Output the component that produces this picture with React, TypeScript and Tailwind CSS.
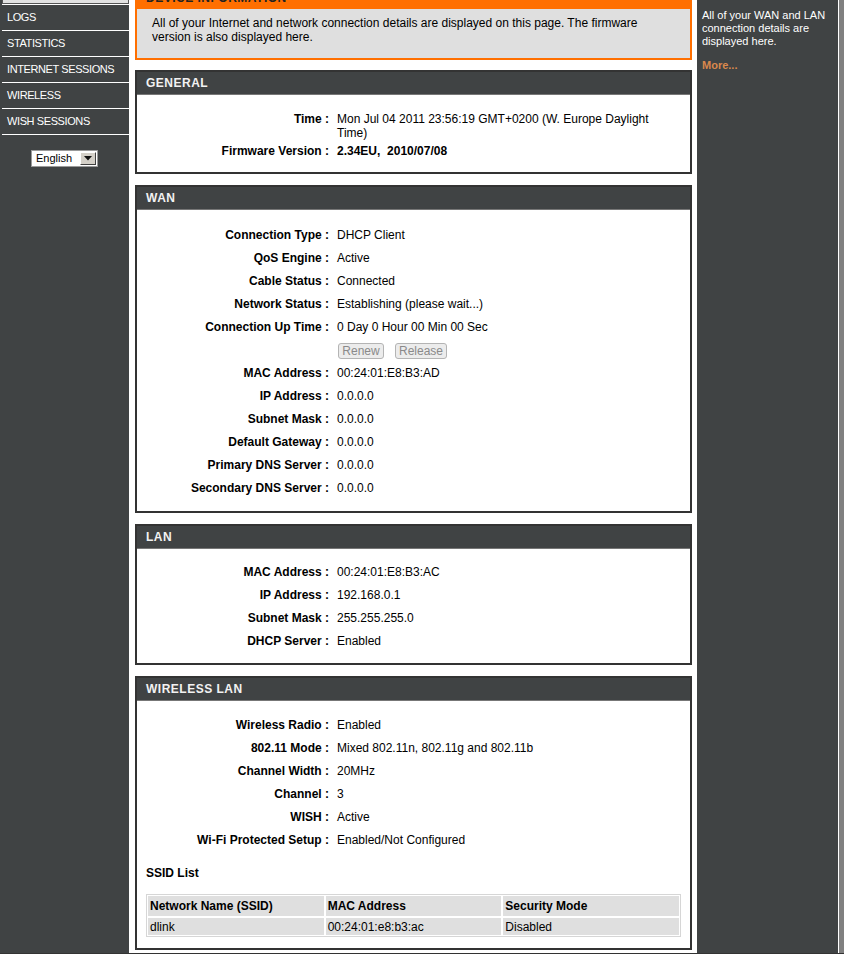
import React from "react";

const NAV = ["LOGS", "STATISTICS", "INTERNET SESSIONS", "WIRELESS", "WISH SESSIONS"];

function Row({ label, children }: { label: string; children: React.ReactNode }) {
  return (
    <div className="flex h-[23px] items-center">
      <div className="w-[192px] shrink-0 text-right font-bold whitespace-nowrap">{label} :</div>
      <div className="ml-[8px] whitespace-nowrap">{children}</div>
    </div>
  );
}

function Panel({
  title,
  children,
  bodyClass,
  last,
}: {
  title: string;
  children: React.ReactNode;
  bodyClass: string;
  last?: boolean;
}) {
  return (
    <div className={`border-2 border-[#333333] ${last ? "" : "mb-[11px]"}`}>
      <div className="flex h-[23px] items-center border-b border-[#777777] bg-[#404344] pl-[9px] text-[12px] font-bold tracking-[0.5px] text-[#f2f2f2]">
        {title}
      </div>
      <div className={`bg-white ${bodyClass} text-[12px] leading-[14px] text-black`}>{children}</div>
    </div>
  );
}

export default function App() {
  return (
    <div className="flex h-[954px] w-[844px] flex-col overflow-hidden font-['Liberation_Sans',Arial,sans-serif]">
      <div className="flex min-h-0 flex-1">
        {/* Left navigation */}
        <div className="w-[129px] shrink-0 bg-[#404344] pl-[2px]">
          <div className="h-[4px] border-x border-b border-[#555555] bg-[#e2e2e2]" />
          <div className="border-b border-white">
            {NAV.map((n) => (
              <div
                key={n}
                className="flex h-[26px] items-center border-t border-white pl-[5px] text-[11px] tracking-[-0.4px] text-white whitespace-nowrap"
              >
                {n}
              </div>
            ))}
          </div>
          <div className="mt-[15px] flex justify-center pr-[2px]">
            <div className="flex h-[17px] w-[67px] items-center border border-[#9a9a9a] bg-white">
              <span className="flex-1 pl-[4px] text-[11px] leading-none text-black">English</span>
              <div className="mr-[1px] flex h-[13px] w-[16px] items-center justify-center border-t border-l border-r border-b border-t-white border-l-white border-r-[#404040] border-b-[#404040] bg-[#d4d0c8]">
                <svg width="8" height="5" viewBox="0 0 8 5">
                  <path d="M0 0 H8 L4 4.5 Z" fill="#111" />
                </svg>
              </div>
            </div>
          </div>
        </div>

        {/* Main content */}
        <div className="w-[568px] shrink-0 overflow-hidden bg-white pl-[6px] pr-[5px]">
          <div className="-mt-[15px] mb-[10px] border-2 border-[#ff6f00]">
            <div className="flex h-[22px] items-center bg-[#ff6f00] pl-[9px] text-[12px] font-bold tracking-[0.5px] text-[#222222]">
              DEVICE INFORMATION
            </div>
            <div className="bg-[#dfdfdf] pb-[14px] pl-[15px] pt-[7px] text-[12px] leading-[14px] text-black">
              All of your Internet and network connection details are displayed on this page. The firmware
              <br />
              version is also displayed here.
            </div>
          </div>

          <Panel title="GENERAL" bodyClass="pt-[12px] pb-[10px]">
            <div className="flex h-[32px] items-start pt-[5px]">
              <div className="w-[192px] shrink-0 text-right font-bold whitespace-nowrap">Time :</div>
              <div className="ml-[8px] whitespace-nowrap">
                Mon Jul 04 2011 23:56:19 GMT+0200 (W. Europe Daylight
                <br />
                Time)
              </div>
            </div>
            <Row label="Firmware Version">
              <span className="font-bold">2.34EU,&nbsp; 2010/07/08</span>
            </Row>
          </Panel>

          <Panel title="WAN" bodyClass="pt-[13px] pb-[12px]">
            <Row label="Connection Type">DHCP Client</Row>
            <Row label="QoS Engine">Active</Row>
            <Row label="Cable Status">Connected</Row>
            <Row label="Network Status">Establishing (please wait...)</Row>
            <Row label="Connection Up Time">0 Day 0 Hour 00 Min 00 Sec</Row>
            <div className="flex h-[23px] items-center pt-[2px]">
              <div className="w-[192px] shrink-0" />
              <div className="ml-[9px] flex gap-[11px]">
                <button
                  type="button"
                  disabled
                  className="flex h-[16px] w-[46px] items-center justify-center rounded-[3px] border border-[#b4b4b4] bg-[#ececec] text-[12px] leading-none text-[#8a8a8a]"
                >
                  Renew
                </button>
                <button
                  type="button"
                  disabled
                  className="flex h-[16px] w-[52px] items-center justify-center rounded-[3px] border border-[#b4b4b4] bg-[#ececec] text-[12px] leading-none text-[#8a8a8a]"
                >
                  Release
                </button>
              </div>
            </div>
            <Row label="MAC Address">00:24:01:E8:B3:AD</Row>
            <Row label="IP Address">0.0.0.0</Row>
            <Row label="Subnet Mask">0.0.0.0</Row>
            <Row label="Default Gateway">0.0.0.0</Row>
            <Row label="Primary DNS Server">0.0.0.0</Row>
            <Row label="Secondary DNS Server">0.0.0.0</Row>
          </Panel>

          <Panel title="LAN" bodyClass="pt-[11px] pb-[11px]">
            <Row label="MAC Address">00:24:01:E8:B3:AC</Row>
            <Row label="IP Address">192.168.0.1</Row>
            <Row label="Subnet Mask">255.255.255.0</Row>
            <Row label="DHCP Server">Enabled</Row>
          </Panel>

          <Panel title="WIRELESS LAN" bodyClass="pt-[12px] pb-[11px]" last>
            <Row label="Wireless Radio">Enabled</Row>
            <Row label="802.11 Mode">Mixed 802.11n, 802.11g and 802.11b</Row>
            <Row label="Channel Width">20MHz</Row>
            <Row label="Channel">3</Row>
            <Row label="WISH">Active</Row>
            <Row label="Wi-Fi Protected Setup">Enabled/Not Configured</Row>
            <div className="mt-[15px] pl-[9px] font-bold">SSID List</div>
            <div className="mx-[9px] mt-[14px] border border-[#d6d6d6] bg-white p-[1px]">
              <div className="grid grid-cols-3 gap-[2px]">
                <div className="flex h-[20px] items-center bg-[#dfdfdf] pl-[2px] font-bold">Network Name (SSID)</div>
                <div className="flex h-[20px] items-center bg-[#dfdfdf] pl-[2px] font-bold">MAC Address</div>
                <div className="flex h-[20px] items-center bg-[#dfdfdf] pl-[2px] font-bold">Security Mode</div>
                <div className="flex h-[17px] items-center bg-[#dfdfdf] pl-[2px]">dlink</div>
                <div className="flex h-[17px] items-center bg-[#dfdfdf] pl-[2px]">00:24:01:e8:b3:ac</div>
                <div className="flex h-[17px] items-center bg-[#dfdfdf] pl-[2px]">Disabled</div>
              </div>
            </div>
          </Panel>
        </div>

        {/* Right help sidebar */}
        <div className="w-[141px] shrink-0 bg-[#404344] pl-[5px] pt-[9px] text-[11px] leading-[13px] text-white">
          <div>
            All of your WAN and LAN
            <br />
            connection details are
            <br />
            displayed here.
          </div>
          <div className="mt-[11px] font-bold text-[#d9884c]">More...</div>
        </div>
        <div className="w-[1px] shrink-0 bg-white" />
        <div className="w-[5px] shrink-0 bg-[#808080]" />
      </div>
      <div className="h-[1px] w-full bg-[#333333]" />
    </div>
  );
}
